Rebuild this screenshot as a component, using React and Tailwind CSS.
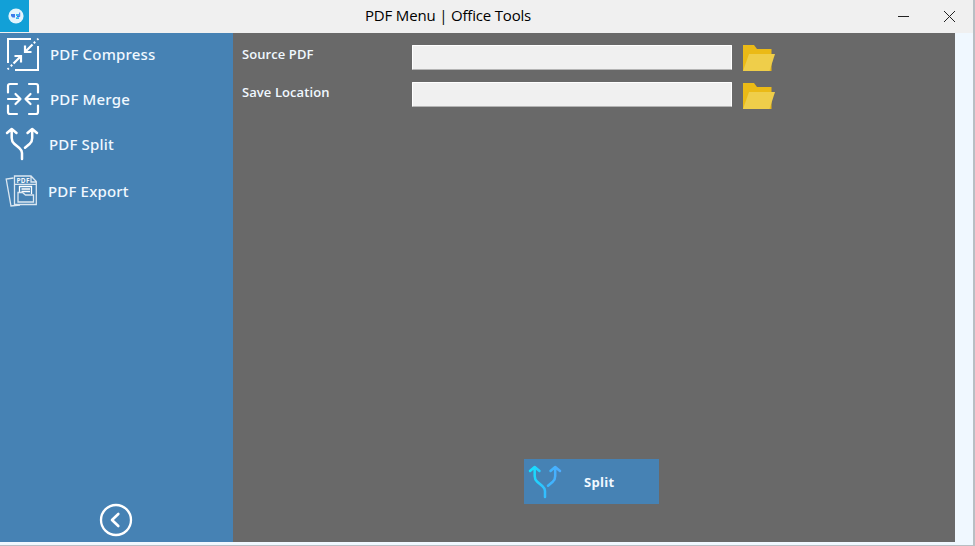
const CompressIcon = () => (
  <svg width="34" height="34" viewBox="0 0 34 34" fill="none" stroke="#fff" strokeWidth="2">
    <path d="M25 2H2V26M9 33H32V9" />
    <path d="M26.5 7.5L19.5 14.5M19 8.5V15H25.5M7.5 26.5L14.5 19.5M8.5 19H15V25.5" strokeWidth="2.2" />
    <path d="M27.8 6.2l1.4-1.4M31.2 2.8l1.2-1.2M6.2 27.8l-1.4 1.4M2.8 31.2l-1.2 1.2" strokeWidth="2" />
  </svg>
);

const MergeIcon = () => (
  <svg width="34" height="34" viewBox="0 0 34 34" fill="none" stroke="#fff" strokeWidth="2.2" strokeLinecap="round">
    <path d="M2 10.5V4q0-2 2-2h7M23 2h7q2 0 2 2v6.5M32 23.5v6.5q0 2-2 2h-7M11 32H4q-2 0-2-2v-6.5" />
    <path d="M2 17H14M9.5 12L14.5 17L9.5 22M32 17H20M24.5 12L19.5 17L24.5 22" strokeLinejoin="round" />
  </svg>
);

const SplitIcon = ({ stroke }) => (
  <svg width="34" height="34" viewBox="0 0 34 34" fill="none" stroke={stroke} strokeWidth="2.5" strokeLinecap="round" strokeLinejoin="round">
    <defs>
      <linearGradient id="splitGradient" gradientUnits="userSpaceOnUse" x1="1" y1="0" x2="32" y2="0">
        <stop offset="0" stopColor="#0fe6ff" />
        <stop offset="0.6" stopColor="#38b8ff" />
        <stop offset="1" stopColor="#4facfe" />
      </linearGradient>
    </defs>
    <path d="M2 6L6.7 2L11.5 6M6.7 2.5V11Q6.7 14.5 9.2 16.7L14.3 21Q17 23.3 17 26V32" />
    <path d="M22.5 6L27.2 2L32 6M27.2 2.5V11Q27.2 14.5 24.8 16.7L20 20.7" />
  </svg>
);

const ExportIcon = () => (
  <svg width="34" height="34" viewBox="0 0 34 34" fill="none" stroke="#dbe7f1" strokeWidth="1.3">
    <path d="M8.5 4L1.2 5L6 32L15 31" />
    <path d="M9.5 2H26L31.3 7.5V30.5H9.5Z M26 2V8H31 M9.5 10.3H31" />
    <text x="11.5" y="8.7" fontSize="6.5" fontWeight="700" fill="#f4f8fb" stroke="none" className="font-['Open_Sans',sans-serif]" textLength="13">PDF</text>
    <path d="M14.5 18V12.5H26.5V20M16.5 15H25M16.5 17.5H25" stroke="#fff" />
    <path d="M13 18.5H17.5L20.5 21H28.5V28H13Z" />
  </svg>
);

const FolderIcon = () => (
  <svg width="33" height="27" viewBox="0 0 33 27">
    <path d="M0 0H11L14 4H28.5V26H0Z" fill="#ebba16" />
    <path d="M6 9H32L26.5 26H0Z" fill="#efce4a" />
  </svg>
);

const MenuItem = ({ icon, label, className, textClass }) => (
  <div className={`flex items-center ${className}`}>
    {icon}
    <span className={`whitespace-nowrap font-['Noto_Sans','Open_Sans',sans-serif] text-[15px] font-medium leading-5 tracking-[0.17px] ${textClass}`}>{label}</span>
  </div>
);

const Field = ({ label, inputClass, className }) => (
  <div className={`flex h-[27px] items-start ${className}`}>
    <span className="-mt-px w-[170px] whitespace-nowrap text-[13px] font-semibold leading-5 tracking-[0.08px]">{label}</span>
    <input aria-label={label} className={`h-[25px] w-80 rounded-[1px] border border-white border-b-[#b4b4b4] bg-[#f0f0f0] outline-none ${inputClass}`} />
    <button aria-label={`Browse ${label}`} className="ml-[11px]"><FolderIcon /></button>
  </div>
);

export default function App() {
  return (
    <div className="flex h-[546px] w-[975px] flex-col overflow-hidden border-b border-r-2 border-[#b8bfc4] bg-[#f0f8ff] font-['Open_Sans','Noto_Sans',sans-serif] text-[#f0f8ff]">
      <header className="flex h-[33px] shrink-0 items-start bg-[#f0f0f0] text-black">
        <div className="flex h-8 w-[29px] items-center justify-center bg-[#12a0d7]">
          <svg className="-mt-px ml-[3px]" width="16" height="16" viewBox="0 0 16 16">
            <circle cx="8" cy="8" r="7.6" fill="#e3f5fd" />
            <path d="M3 6h4v3.5H4.5L3 8Z" fill="#3d7bea" />
            <path d="M8 6h3v2H8ZM8 9.3h3v1.6H8Z" fill="#38b7ee" />
            <path d="M11.7 4.5v4H9" fill="none" stroke="#3d6df0" />
          </svg>
        </div>
        <h1 className="ml-[336px] w-[500px] whitespace-nowrap text-[15px] font-normal leading-[30px] tracking-[-0.18px]">PDF Menu | Office Tools</h1>
        <svg className="ml-[32px] mt-[10px]" width="60" height="14" viewBox="0 0 60 14" fill="none" stroke="#222">
          <path d="M1 6.5H12M47 1L58 12M58 1L47 12" />
        </svg>
      </header>
      <div className="flex h-[509px]">
        <aside className="flex w-[233px] flex-col bg-[#4682b4]">
          <MenuItem icon={<CompressIcon />} label="PDF Compress" className="ml-1.5 mt-1" textClass="ml-[10px]" />
          <MenuItem icon={<MergeIcon />} label="PDF Merge" className="ml-1.5 mt-[11px]" textClass="ml-[10px]" />
          <MenuItem icon={<SplitIcon stroke="#fff" />} label="PDF Split" className="ml-[5px] mt-[11px]" textClass="ml-[10px]" />
          <MenuItem icon={<ExportIcon />} label="PDF Export" className="ml-[5px] mt-[13px]" textClass="ml-[9px]" />
          <button aria-label="Back" className="mb-[5px] ml-[99px] mt-auto self-start">
            <svg width="34" height="34" viewBox="0 0 34 34" fill="none" stroke="#fff" strokeWidth="2.3">
              <circle cx="17" cy="17" r="15" />
              <path d="M19.3 11L13 17L19.3 23" strokeLinecap="round" strokeLinejoin="round" strokeWidth="2.6" />
            </svg>
          </button>
        </aside>
        <main className="flex w-[722px] flex-col bg-[#696969] pl-[9px]">
          <Field label="Source PDF" className="mt-3" inputClass="" />
          <Field label="Save Location" className="mt-[11px]" inputClass="-mt-px" />
          <button className="mb-[38px] ml-[282px] mt-auto flex h-[45px] w-[135px] items-center bg-[#4682b4]">
            <span className="ml-1"><SplitIcon stroke="url(#splitGradient)" /></span>
            <span className="ml-[22px] text-[13px] font-bold leading-5 tracking-[0.3px]">Split</span>
          </button>
        </main>
      </div>
    </div>
  );
}
